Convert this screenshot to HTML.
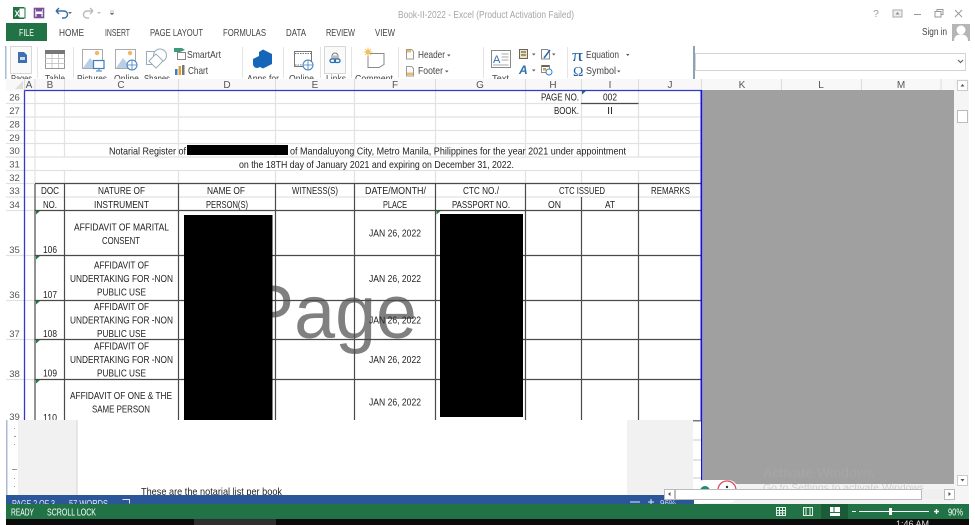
<!DOCTYPE html>
<html><head><meta charset="utf-8"><style>
html,body{margin:0;padding:0;background:#fff;width:975px;height:525px;overflow:hidden}
svg{display:block;filter:blur(.35px)}
text{font-family:"Liberation Sans",sans-serif;font-size:10.5px;fill:#222}
.m{text-anchor:middle}
.r{fill:#555;font-size:9.5px;text-anchor:middle}
.h{fill:#555;font-size:10px;text-anchor:middle}
.t{fill:#444;font-size:10.5px}
</style></head><body>
<svg width="975" height="525" viewBox="0 0 975 525" xmlns="http://www.w3.org/2000/svg">
<rect width="975" height="525" fill="#fff"/>
<!-- title bar -->
<rect x="13" y="7" width="11" height="12" fill="#217346"/><rect x="19" y="8" width="6" height="10" fill="#fff" stroke="#217346"/>
<text x="14.500" y="16.500" style="font-size:8px;font-weight:bold;fill:#fff">X</text>
<rect x="34.500" y="8.500" width="9" height="9" fill="none" stroke="#7a4f9a" stroke-width="1.600"/><rect x="36" y="8" width="6" height="3.500" fill="#7a4f9a"/><rect x="36.500" y="14" width="5" height="4" fill="#7a4f9a"/>
<path d="M56 11h8a3.500 3.500 0 0 1 0 7h-2M56 11l3-3M56 11l3 3" fill="none" stroke="#3a6ea5" stroke-width="1.400"/>
<path d="M68 12l4 0-2 2z" fill="#666"/>
<path d="M93 11h-6a3.500 3.500 0 0 0 0 7h2M93 11l-3-3M93 11l-3 3" fill="none" stroke="#bbb" stroke-width="1.400"/>
<path d="M97 12l4 0-2 2z" fill="#bbb"/>
<path d="M110 11h4M110 13l4 0-2 2z" fill="#777" stroke="#777" stroke-width=".5"/>
<text x="398" y="18" textLength="176" lengthAdjust="spacingAndGlyphs" style="fill:#a6a6a6;font-size:10.500px">Book-II-2022 - Excel (Product Activation Failed)</text>
<text x="876" y="17" class="m" style="fill:#999;font-size:10px">?</text>
<rect x="893" y="10" width="9" height="7" fill="#eee" stroke="#aaa"/><path d="M895.500 14.500l2-2.500 2 2.500z" fill="#888"/>
<path d="M914 14.500h7" stroke="#999" stroke-width="1"/>
<rect x="935" y="11.500" width="6" height="5.500" fill="none" stroke="#999"/><path d="M937 11.500v-2h6v5h-2" fill="none" stroke="#999"/>
<path d="M955 10l7 7M962 10l-7 7" stroke="#999" stroke-width="1"/>
<text x="922" y="35" textLength="25" lengthAdjust="spacingAndGlyphs" style="fill:#444;font-size:10.500px">Sign in</text>
<rect x="952" y="24" width="18" height="17" fill="#b5b5b5"/><circle cx="961" cy="30" r="4.500" fill="#fff"/><path d="M954 41c0-5 3-6.500 7-6.500s7 1.500 7 6.500z" fill="#fff"/>
<!-- tabs -->
<rect x="6" y="23" width="41" height="18" fill="#217346"/>
<text x="19" y="36" textLength="15" lengthAdjust="spacingAndGlyphs" style="fill:#fff;font-size:10px">FILE</text>
<text x="59" y="36" textLength="25" lengthAdjust="spacingAndGlyphs" class="t">HOME</text>
<text x="105" y="36" textLength="25" lengthAdjust="spacingAndGlyphs" class="t">INSERT</text>
<text x="150" y="36" textLength="53" lengthAdjust="spacingAndGlyphs" class="t">PAGE LAYOUT</text>
<text x="223" y="36" textLength="43" lengthAdjust="spacingAndGlyphs" class="t">FORMULAS</text>
<text x="286" y="36" textLength="20" lengthAdjust="spacingAndGlyphs" class="t">DATA</text>
<text x="326" y="36" textLength="29" lengthAdjust="spacingAndGlyphs" class="t">REVIEW</text>
<text x="375" y="36" textLength="20" lengthAdjust="spacingAndGlyphs" class="t">VIEW</text>
<!-- ribbon -->
<rect x="5" y="46" width="1.500" height="33" fill="#a9bbd6"/>
<g stroke="#e4e4e4"><path d="M37.500 47v31M73.500 47v31M242.500 47v31M283.500 47v31M320.500 47v31M351.500 47v31M398.500 47v31M483.500 47v31M567.500 47v31"/></g>
<rect x="10.500" y="46.500" width="21" height="27" fill="#fafafa" stroke="#d8d8d8"/>
<path d="M18 52h6l3 3v8h-9z" fill="#3f6fb0"/><rect x="20" y="57" width="5" height="3" fill="#cfdcf0"/>
<text x="11" y="82" textLength="21" lengthAdjust="spacingAndGlyphs" class="t">Pages</text>
<rect x="45.500" y="50.500" width="19" height="18" fill="#fff" stroke="#999"/><rect x="45" y="50" width="20" height="4" fill="#777"/>
<path d="M45 58.500h20M45 63.500h20M52 54v14M58.500 54v14" stroke="#bbb" stroke-width=".8"/>
<text x="45" y="82" textLength="20" lengthAdjust="spacingAndGlyphs" class="t">Table</text>
<!-- pictures -->
<rect x="82.500" y="49.500" width="20" height="19" fill="#fff" stroke="#aaa"/><path d="M83 68l7-10 5 6 3-2v6z" fill="#b9cfe6"/><circle cx="97" cy="53" r="2.200" fill="#f0b860"/>
<rect x="93.500" y="60.500" width="10.500" height="8" fill="#fff" stroke="#3f7fbf" stroke-width="1.200"/><path d="M96 71h6M99 69v2" stroke="#3f7fbf"/>
<text x="77" y="82" textLength="30" lengthAdjust="spacingAndGlyphs" class="t">Pictures</text>
<rect x="115.500" y="49.500" width="20" height="19" fill="#fff" stroke="#aaa"/><path d="M116 68l7-10 5 6 3-2v6z" fill="#b9cfe6"/><circle cx="130" cy="53" r="2.200" fill="#f0b860"/>
<circle cx="132" cy="65" r="5" fill="#fff" stroke="#3f7fbf"/><path d="M127 65h10M132 60v10" stroke="#3f7fbf" stroke-width=".8"/>
<text x="114" y="82" textLength="25" lengthAdjust="spacingAndGlyphs" class="t">Online</text>
<rect x="146.500" y="51.500" width="13" height="13" fill="none" stroke="#9ab"/>
<circle cx="160" cy="55.500" r="6.500" fill="#fff" stroke="#9ab"/><rect x="151" y="56" width="10" height="10" transform="rotate(45 156 61)" fill="#fff" stroke="#9ab"/>
<text x="144" y="82" textLength="26" lengthAdjust="spacingAndGlyphs" class="t">Shapes</text>
<path d="M174 48h8l3 2-5 2h-6z" fill="#3f9a78"/><rect x="177.500" y="52.500" width="8" height="7" fill="#fff" stroke="#888"/>
<text x="187" y="58" textLength="34" lengthAdjust="spacingAndGlyphs" class="t">SmartArt</text>
<rect x="175" y="69" width="2.500" height="6" fill="#3f7fbf"/><rect x="178.500" y="66" width="2.500" height="9" fill="#e0a030"/><rect x="182" y="65" width="2.500" height="10" fill="#777"/>
<text x="188" y="74" textLength="20" lengthAdjust="spacingAndGlyphs" class="t">Chart</text>
<path d="M263 49.500l9 4.500v10l-9 4.500-4-2v-3.500l-2-1-4 2v-5l6-3v-4z" fill="#1565b8"/><circle cx="257" cy="64" r="4" fill="#1565b8"/>
<text x="247" y="82" textLength="32" lengthAdjust="spacingAndGlyphs" class="t">Apps for</text>
<rect x="294.500" y="51.500" width="17" height="15" fill="#fff" stroke="#777"/><path d="M295 53.500h16M295 65h10" stroke="#777" stroke-dasharray="1.500 1"/>
<circle cx="308" cy="65" r="5" fill="#fff" stroke="#3f7fbf"/><path d="M303 65h10M308 60v10" stroke="#3f7fbf" stroke-width=".8"/>
<text x="289" y="82" textLength="25" lengthAdjust="spacingAndGlyphs" class="t">Online</text>
<rect x="324.500" y="46.500" width="21" height="27" fill="#fafafa" stroke="#d8d8d8"/>
<path d="M332 56a3 3 0 0 1 6 0" fill="none" stroke="#777"/><rect x="331" y="55.500" width="8" height="3" fill="#bbb"/>
<rect x="330" y="59" width="5.500" height="3.500" rx="1.700" fill="none" stroke="#2a6fb0" stroke-width="1.300"/><rect x="334.500" y="59" width="5.500" height="3.500" rx="1.700" fill="none" stroke="#2a6fb0" stroke-width="1.300"/>
<text x="326" y="82" textLength="20" lengthAdjust="spacingAndGlyphs" class="t">Links</text>
<path d="M366.500 53.500h17.500v11l-5 3h-11v-14z" fill="#fff" stroke="#888"/>
<circle cx="368" cy="52" r="2.500" fill="#f3c060"/><path d="M368 47.500v9M363.500 52h9M365 49l6 6M371 49l-6 6" stroke="#f3c060" stroke-width=".8"/>
<text x="355" y="82" textLength="38" lengthAdjust="spacingAndGlyphs" class="t">Comment</text>
<path d="M406.500 49.500h5l2 2v7.500h-7z" fill="#fff" stroke="#999"/><rect x="407" y="50" width="4" height="2.500" fill="#f0b860"/>
<text x="418" y="58" textLength="27" lengthAdjust="spacingAndGlyphs" class="t">Header</text><path d="M447 54.500h3.500l-1.700 2z" fill="#555"/>
<path d="M406.500 66.500h5l2 2v7.500h-7z" fill="#fff" stroke="#999"/><rect x="407" y="72.500" width="6" height="2.500" fill="#f0b860"/>
<text x="418" y="74" textLength="25" lengthAdjust="spacingAndGlyphs" class="t">Footer</text><path d="M445 70.500h3.500l-1.700 2z" fill="#555"/>
<rect x="491.500" y="50.500" width="19" height="17" fill="#fff" stroke="#888"/>
<text x="493" y="63" style="font-size:11px;fill:#2a6fb0">A</text><path d="M501.500 54h7M501.500 57h7M501.500 60h7M493 65h15.500" stroke="#aaa"/>
<text x="492" y="82" textLength="17" lengthAdjust="spacingAndGlyphs" class="t">Text</text>
<rect x="519.500" y="49.500" width="8" height="9" fill="#f2e3b8" stroke="#666"/><path d="M521 52h5M521 55h5" stroke="#444"/><path d="M532 53.500h3.500l-1.700 2z" fill="#555"/>
<text x="519" y="74" style="font-size:12px;font-weight:bold;font-style:italic;fill:#2a6fb0">A</text><path d="M532 69.500h3.500l-1.700 2z" fill="#555"/>
<path d="M541.500 49.500h6l2 2v7.500h-8z" fill="#fff" stroke="#888"/><path d="M544 58l6-8" stroke="#2a6fb0" stroke-width="1.600"/><path d="M552 53.500h3.500l-1.700 2z" fill="#555"/>
<rect x="541.500" y="65.500" width="8" height="7" fill="#fff" stroke="#888"/><rect x="542" y="65" width="7" height="2" fill="#666"/><rect x="543" y="68" width="3" height="2.500" fill="#e0a030"/><circle cx="549" cy="72" r="3" fill="#fff" stroke="#3f7fbf"/>
<text x="572" y="61" textLength="11" lengthAdjust="spacingAndGlyphs" style="font-size:17px;fill:#1f5fa8;font-family:'Liberation Serif',serif">π</text>
<text x="586" y="58" textLength="33" lengthAdjust="spacingAndGlyphs" class="t">Equation</text><path d="M626 54h3.500l-1.700 2z" fill="#555"/>
<text x="573" y="76" style="font-size:14px;fill:#1f5fa8;font-family:'Liberation Serif',serif">Ω</text>
<text x="586" y="74" textLength="30" lengthAdjust="spacingAndGlyphs" class="t">Symbol</text><path d="M617 70.500h3.500l-1.700 2z" fill="#555"/>
<rect x="693" y="46" width="2" height="33" fill="#8fa0b8"/>
<rect x="695.500" y="53.500" width="270" height="17" fill="#fff" stroke="#d4d4d4"/>
<path d="M958 60l2.500 2.500 2.500-2.500" fill="none" stroke="#666" stroke-width="1.200"/>
<!-- col header -->
<rect x="6" y="79" width="948" height="12" fill="#f8f8f8"/>
<path d="M23 81v8h-8z" fill="#dedede"/>
<g stroke="#dcdcdc"><path d="M24.500 79v12M35 79v12M64.500 79v12M178.500 79v12M275.500 79v12M354.500 79v12M435.500 79v12M525.500 79v12M581.500 79v12M638.500 79v12M701.500 79v12M781.500 79v12M861.500 79v12M941 79v12"/></g>
<text x="29" y="88" class="h">A</text><text x="50" y="88" class="h">B</text><text x="121" y="88" class="h">C</text><text x="227" y="88" class="h">D</text><text x="315" y="88" class="h">E</text><text x="395" y="88" class="h">F</text><text x="480" y="88" class="h">G</text><text x="553" y="88" class="h">H</text><text x="610" y="88" class="h">I</text><text x="670" y="88" class="h">J</text><text x="742" y="88" class="h">K</text><text x="821" y="88" class="h">L</text><text x="901" y="88" class="h">M</text>
<!-- gray area -->
<rect x="703" y="90" width="251" height="394" fill="#a0a0a0"/>
<text x="763" y="477" textLength="111" lengthAdjust="spacingAndGlyphs" style="font-size:12.500px;fill:#a6a6a6">Activate Windows</text>
<!-- sheet -->
<rect x="6" y="91" width="696" height="330" fill="#fff"/>
<g stroke="#e2e2e2" stroke-width="1.200">
<path d="M6 103.500h695M6 117h695M6 130.500h695M6 143.500h695M6 157h695M6 170.500h695M6 183.500h695M6 197h695M6 210.500h29M6 255.500h29M6 300.500h29M6 339.500h29M6 379.500h29"/>
<path d="M35 91v93M64.500 91v66M64.500 170.500v13M178.500 91v66M178.500 170.500v13M275.500 91v66M275.500 170.500v13M354.500 91v66M354.500 170.500v13M435.500 91v66M435.500 170.500v13M525.500 91v66M525.500 170.500v13M581.500 91v66M581.500 170.500v13M638.500 91v66M638.500 170.500v13"/>
</g>
<!-- watermark -->
<text x="245" y="338" textLength="172" lengthAdjust="spacingAndGlyphs" style="font-size:76px;fill:#808080">Page</text>
<!-- table lines -->
<g stroke="#4a4a4a" stroke-width="1.200" fill="none">
<path d="M35 183.500H701M35 210.500H701M35 255.500H701M35 300.500H701M35 339.500H701M35 379.500H701"/>
<path d="M35 184V421M64.500 184V421M178.500 184V421M275.500 184V421M354.500 184V421M435.500 184V421M525.500 184V421M581.500 197V421M638.500 184V421"/>
<path d="M581 103.500h57.500"/>
</g>
<!-- redactions -->
<rect x="187" y="145" width="101" height="10" fill="#000"/>
<rect x="184" y="215" width="88.500" height="206" fill="#000"/>
<rect x="440" y="214" width="83" height="203" fill="#000"/>
<!-- green triangles -->
<g fill="#1f7a3a"><path d="M36 211h4l-4 3.500zM36 256h4l-4 3.500zM36 301h4l-4 3.500zM36 340h4l-4 3.500zM36 380h4l-4 3.500zM436.500 211h4l-4 3.500zM582 91h4l-4 3.500z"/></g>
<!-- blue border -->
<path d="M24.500 90.500H701.500M24.500 90.500V421" fill="none" stroke="#3535d0" stroke-width="1.300"/>
<path d="M701.500 90V484" stroke="#1515cc" stroke-width="2"/>
<!-- row headers -->
<text x="14.500" y="100.500" class="r">26</text><text x="14.500" y="114" class="r">27</text><text x="14.500" y="127.500" class="r">28</text><text x="14.500" y="141" class="r">29</text><text x="14.500" y="154" class="r">30</text><text x="14.500" y="167.500" class="r">31</text><text x="14.500" y="181" class="r">32</text><text x="14.500" y="194" class="r">33</text><text x="14.500" y="208" class="r">34</text><text x="14.500" y="253" class="r">35</text><text x="14.500" y="298" class="r">36</text><text x="14.500" y="337" class="r">37</text><text x="14.500" y="377" class="r">38</text><text x="14.500" y="420" class="r">39</text>
<!-- cells -->
<text x="541" y="100.500" textLength="38" lengthAdjust="spacingAndGlyphs">PAGE NO.</text>
<text x="554" y="114" textLength="25" lengthAdjust="spacingAndGlyphs">BOOK.</text>
<text x="603" y="100.500" textLength="14" lengthAdjust="spacingAndGlyphs">002</text><text x="610" y="114" class="m">II</text>
<text x="109" y="154.500" textLength="77" lengthAdjust="spacingAndGlyphs">Notarial Register of</text>
<text x="290" y="154.500" textLength="336" lengthAdjust="spacingAndGlyphs">of Mandaluyong City, Metro Manila, Philippines for the year 2021 under appointment</text>
<text x="239" y="168" textLength="275" lengthAdjust="spacingAndGlyphs">on the 18TH day of January 2021 and expiring on December 31, 2022.</text>

<text x="41" y="194" textLength="18" lengthAdjust="spacingAndGlyphs">DOC</text>
<text x="43" y="208" textLength="14" lengthAdjust="spacingAndGlyphs">NO.</text>
<text x="98" y="194" textLength="47" lengthAdjust="spacingAndGlyphs">NATURE OF</text>
<text x="94" y="208" textLength="55" lengthAdjust="spacingAndGlyphs">INSTRUMENT</text>
<text x="207" y="194" textLength="38" lengthAdjust="spacingAndGlyphs">NAME OF</text>
<text x="206" y="208" textLength="42" lengthAdjust="spacingAndGlyphs">PERSON(S)</text>
<text x="292" y="194" textLength="46" lengthAdjust="spacingAndGlyphs">WITNESS(S)</text>
<text x="365" y="194" textLength="61" lengthAdjust="spacingAndGlyphs">DATE/MONTH/</text>
<text x="383" y="208" textLength="24" lengthAdjust="spacingAndGlyphs">PLACE</text>
<text x="463" y="194" textLength="36" lengthAdjust="spacingAndGlyphs">CTC NO./</text>
<text x="452" y="208" textLength="58" lengthAdjust="spacingAndGlyphs">PASSPORT NO.</text>
<text x="559" y="194" textLength="46" lengthAdjust="spacingAndGlyphs">CTC ISSUED</text>
<text x="548" y="208" textLength="13" lengthAdjust="spacingAndGlyphs">ON</text>
<text x="605" y="208" textLength="10" lengthAdjust="spacingAndGlyphs">AT</text>
<text x="651" y="194" textLength="39" lengthAdjust="spacingAndGlyphs">REMARKS</text>

<text x="74" y="230.500" textLength="95" lengthAdjust="spacingAndGlyphs">AFFIDAVIT OF MARITAL</text>
<text x="102" y="244" textLength="38" lengthAdjust="spacingAndGlyphs">CONSENT</text>
<text x="43" y="253" textLength="14" lengthAdjust="spacingAndGlyphs">106</text>

<text x="94" y="268.500" textLength="55" lengthAdjust="spacingAndGlyphs">AFFIDAVIT OF</text>
<text x="70" y="282" textLength="103" lengthAdjust="spacingAndGlyphs">UNDERTAKING FOR -NON</text>
<text x="97" y="295.500" textLength="49" lengthAdjust="spacingAndGlyphs">PUBLIC  USE</text>
<text x="43" y="298" textLength="14" lengthAdjust="spacingAndGlyphs">107</text>

<text x="94" y="310" textLength="55" lengthAdjust="spacingAndGlyphs">AFFIDAVIT OF</text>
<text x="70" y="323.500" textLength="103" lengthAdjust="spacingAndGlyphs">UNDERTAKING FOR -NON</text>
<text x="97" y="337" textLength="49" lengthAdjust="spacingAndGlyphs">PUBLIC  USE</text>
<text x="43" y="337" textLength="14" lengthAdjust="spacingAndGlyphs">108</text>

<text x="94" y="349.500" textLength="55" lengthAdjust="spacingAndGlyphs">AFFIDAVIT OF</text>
<text x="70" y="363" textLength="103" lengthAdjust="spacingAndGlyphs">UNDERTAKING FOR -NON</text>
<text x="97" y="376.500" textLength="49" lengthAdjust="spacingAndGlyphs">PUBLIC  USE</text>
<text x="43" y="376.500" textLength="14" lengthAdjust="spacingAndGlyphs">109</text>

<text x="70" y="399" textLength="102" lengthAdjust="spacingAndGlyphs">AFFIDAVIT OF ONE &amp; THE</text>
<text x="92" y="412.500" textLength="58" lengthAdjust="spacingAndGlyphs">SAME PERSON</text>
<text x="43" y="421" textLength="14" lengthAdjust="spacingAndGlyphs">110</text>

<text x="369" y="236.500" textLength="52" lengthAdjust="spacingAndGlyphs">JAN 26, 2022</text>
<text x="369" y="282" textLength="52" lengthAdjust="spacingAndGlyphs">JAN 26, 2022</text>
<text x="369" y="323.500" textLength="52" lengthAdjust="spacingAndGlyphs">JAN 26, 2022</text>
<text x="369" y="363" textLength="52" lengthAdjust="spacingAndGlyphs">JAN 26, 2022</text>
<text x="369" y="405.500" textLength="52" lengthAdjust="spacingAndGlyphs">JAN 26, 2022</text>
<!-- word overlay -->
<rect x="0" y="420" width="693" height="75" fill="#fff"/>
<rect x="6" y="420" width="1.500" height="75" fill="#a9bbd6"/>
<rect x="18" y="420" width="59" height="75" fill="#f1f1f1"/>
<rect x="76.500" y="420" width="1" height="75" fill="#d4d4d4"/>
<rect x="627" y="420" width="66" height="75" fill="#f1f1f1"/>
<g fill="#999"><rect x="14" y="428" width="1" height="1"/><rect x="14" y="436" width="2" height="1"/><rect x="14" y="444" width="1" height="1"/><rect x="12" y="469" width="5" height="1"/><rect x="14" y="478" width="1" height="1"/><rect x="14" y="486" width="1" height="1"/></g>
<text x="141" y="495" textLength="141" lengthAdjust="spacingAndGlyphs" style="fill:#222;font-size:10.500px">These are the notarial list per book</text>
<rect x="6" y="495" width="688" height="9" fill="#2b579a"/>
<text x="12" y="507" textLength="43" lengthAdjust="spacingAndGlyphs" style="fill:#dfe6f2;font-size:10px">PAGE 2 OF 3</text>
<text x="69" y="507" textLength="39" lengthAdjust="spacingAndGlyphs" style="fill:#dfe6f2;font-size:10px">57 WORDS</text>
<path d="M122.500 499.500h7v4" fill="none" stroke="#dfe6f2"/>
<path d="M630 502h10M648 502h6M651 499v5" stroke="#dfe6f2"/>
<text x="660" y="506" style="fill:#cdd8ea;font-size:8px">96%</text>
<!-- right of word: narrow grid -->
<rect x="693" y="420" width="8" height="62" fill="#fff"/>
<path d="M693 440h8M693 460h8M693 478h8" stroke="#c8c8c8"/>
<rect x="693" y="420" width="8" height="1.500" fill="#777"/>
<!-- v scrollbar -->
<rect x="954" y="79" width="15" height="425" fill="#f5f5f5"/>
<rect x="957.500" y="80.500" width="10" height="10" fill="#fff" stroke="#ccc"/><path d="M960.500 86.500h4l-2-2.500z" fill="#555"/>
<rect x="957.500" y="110.500" width="10" height="12" fill="#fff" stroke="#bbb"/>
<rect x="957.500" y="475.500" width="10" height="10" fill="#fff" stroke="#ccc"/><path d="M960.500 479h4l-2 2.500z" fill="#555"/>
<!-- h scrollbar area -->
<rect x="703" y="484" width="251" height="20" fill="#f3f3f3"/>
<text x="763" y="491" textLength="164" lengthAdjust="spacingAndGlyphs" style="font-size:10px;fill:#cfcfcf">Go to Settings to activate Windows.</text>
<!-- widget -->
<rect x="693" y="480" width="45" height="23" rx="10" fill="#fff"/>
<circle cx="705" cy="491" r="5" fill="#1e8a78"/>
<circle cx="727" cy="490" r="9" fill="#fff" stroke="#e0485f" stroke-width="1.300"/><circle cx="727" cy="487" r="1.200" fill="#333"/>
<rect x="664" y="489" width="291" height="10" fill="#efefef"/>
<rect x="664.500" y="489.500" width="10" height="10" fill="#fff" stroke="#bbb"/><path d="M670.500 492v4l-2.500-2z" fill="#555"/>
<rect x="675.500" y="489.500" width="246" height="10" fill="#fff" stroke="#bbb"/>
<rect x="944.500" y="489.500" width="10" height="10" fill="#fff" stroke="#bbb"/><path d="M948.500 492v4l2.500-2z" fill="#555"/>
<!-- status bar -->
<rect x="6" y="504" width="963" height="15" fill="#217346"/>
<text x="11" y="515.500" textLength="23" lengthAdjust="spacingAndGlyphs" style="fill:#fff;font-size:10px">READY</text>
<text x="47" y="515.500" textLength="49" lengthAdjust="spacingAndGlyphs" style="fill:#fff;font-size:10px">SCROLL LOCK</text>
<rect x="821" y="504" width="27" height="15" fill="#1a5c38"/>
<g fill="none" stroke="#e6efe9"><rect x="776.500" y="507.500" width="9" height="8"/><path d="M776.500 510.500h9M776.500 513h9M779.500 507.500v8M782.500 507.500v8"/>
<rect x="803.500" y="507.500" width="9" height="8"/><path d="M806 507.500v8M810 507.500v8"/></g>
<rect x="830" y="507" width="10" height="9" fill="#fff"/><rect x="833.500" y="507" width="1" height="5" fill="#217346"/><rect x="830" y="512" width="10" height="1" fill="#217346"/>
<path d="M852 511.500h4M859 511.500h70" stroke="#fff"/><path d="M934 511.500h5M936.500 509v5" stroke="#fff" stroke-width="1.400"/>
<rect x="889" y="508" width="3" height="7" fill="#fff"/>
<text x="948" y="515.500" textLength="15" lengthAdjust="spacingAndGlyphs" style="fill:#fff;font-size:10px">90%</text>
<!-- bottom bar -->
<rect x="6" y="519" width="963" height="6" fill="#0b0b0b"/>
<rect x="194" y="519" width="82" height="6" fill="#2f2f2f"/>
<text x="896" y="527" style="fill:#ddd;font-size:9px">1:46 AM</text>
</svg>
</body></html>
